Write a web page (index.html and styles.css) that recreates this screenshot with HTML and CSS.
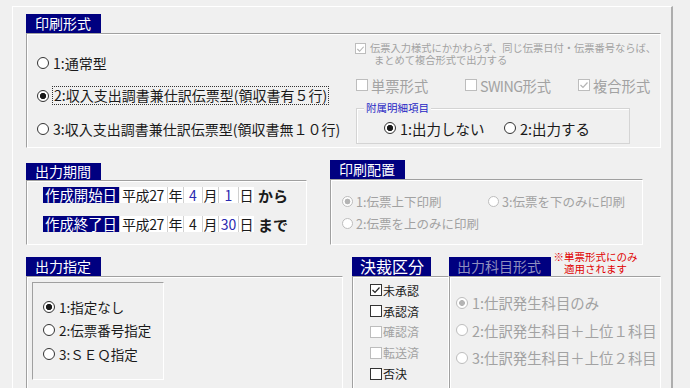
FILE: index.html
```html
<!DOCTYPE html>
<html lang="ja">

<head>
    <meta charset="UTF-8">
    <title>伝票印刷設定</title>
    <link rel="stylesheet" href="styles.css">
</head>

<body>
    <div class="panel">

        <!-- 印刷形式 -->
        <div class="group fmt">
            <div class="tab">印刷形式</div>
            <div class="box fmt-box">
                <div class="fmt-left">
                    <div class="opt"><span class="rb"></span>1:通常型</div>
                    <div class="opt"><span class="rb on"></span><span class="focus">2:収入支出調書兼仕訳伝票型(領収書有５行)</span></div>
                    <div class="opt"><span class="rb"></span>3:収入支出調書兼仕訳伝票型(領収書無１０行)</div>
                </div>
                <div class="fmt-right">
                    <div class="merge dis">
                        <span class="cb"><svg viewBox="0 0 10 10"><path d="M1.5 5 L4 7.5 L8.5 2.5" /></svg></span>
                        <p>伝票入力様式にかかわらず、同じ伝票日付・伝票番号ならば、<br><span class="indent">まとめて複合形式で出力する</span></p>
                    </div>
                    <div class="kinds dis">
                        <div class="opt k1"><span class="cb"></span>単票形式</div>
                        <div class="opt k2"><span class="cb"></span><span class="latin">SWING</span>形式</div>
                        <div class="opt"><span class="cb"><svg viewBox="0 0 10 10"><path d="M1.5 5 L4 7.5 L8.5 2.5" /></svg></span>複合形式</div>
                    </div>
                    <div class="attach">
                        <span class="attach-label">附属明細項目</span>
                        <div class="opt a1"><span class="rb on"></span>1:出力しない</div>
                        <div class="opt"><span class="rb"></span>2:出力する</div>
                    </div>
                </div>
            </div>
        </div>

        <div class="row">
            <!-- 出力期間 -->
            <div class="group period">
                <div class="tab">出力期間</div>
                <div class="box">
                    <div class="date-row">
                        <div class="date-label">作成開始日</div>
                        <div class="cell c-era">平成27</div>
                        <div class="cell c-unit">年</div>
                        <div class="cell c-m blue">4</div>
                        <div class="cell c-unit">月</div>
                        <div class="cell c-d blue">1</div>
                        <div class="cell c-unit">日</div>
                        <div class="suffix">から</div>
                    </div>
                    <div class="date-row">
                        <div class="date-label">作成終了日</div>
                        <div class="cell c-era">平成27</div>
                        <div class="cell c-unit">年</div>
                        <div class="cell c-m">4</div>
                        <div class="cell c-unit">月</div>
                        <div class="cell c-d blue">30</div>
                        <div class="cell c-unit">日</div>
                        <div class="suffix">まで</div>
                    </div>
                </div>
            </div>

            <!-- 印刷配置 -->
            <div class="group layout">
                <div class="tab">印刷配置</div>
                <div class="box dis">
                    <div class="opt"><span class="rb on"></span>1:伝票上下印刷</div>
                    <div class="opt"><span class="rb"></span>3:伝票を下のみに印刷</div>
                    <div class="opt"><span class="rb"></span>2:伝票を上のみに印刷</div>
                </div>
            </div>
        </div>

        <div class="row">
            <!-- 出力指定 -->
            <div class="group output">
                <div class="tab">出力指定</div>
                <div class="box">
                    <div class="inner">
                        <div class="opt"><span class="rb on"></span>1:指定なし</div>
                        <div class="opt"><span class="rb"></span>2:伝票番号指定</div>
                        <div class="opt"><span class="rb"></span>3:ＳＥＱ指定</div>
                    </div>
                </div>
            </div>

            <!-- 決裁区分 -->
            <div class="group decision">
                <div class="tab">決裁区分</div>
                <div class="box">
                    <div class="opt"><span class="cb"><svg viewBox="0 0 10 10"><path d="M1.5 5 L4 7.5 L8.5 2.5" /></svg></span>未承認</div>
                    <div class="opt"><span class="cb"></span>承認済</div>
                    <div class="opt dis"><span class="cb"></span>確認済</div>
                    <div class="opt dis"><span class="cb"></span>転送済</div>
                    <div class="opt"><span class="cb"></span>否決</div>
                </div>
            </div>

            <!-- 出力科目形式 -->
            <div class="group subject">
                <div class="subject-head">
                    <div class="tab">出力科目形式</div>
                    <div class="note">※単票形式にのみ<br>適用されます</div>
                </div>
                <div class="box dis">
                    <div class="opt"><span class="rb on"></span>1:仕訳発生科目のみ</div>
                    <div class="opt"><span class="rb"></span>2:仕訳発生科目＋上位１科目</div>
                    <div class="opt"><span class="rb"></span>3:仕訳発生科目＋上位２科目</div>
                </div>
            </div>
        </div>

    </div>
</body>

</html>
```

FILE: styles.css
```css
* {
    box-sizing: border-box;
}

body {
    margin: 0;
    background: #f0f0f0;
    font-family: "Noto Sans CJK JP", "Noto Sans", sans-serif;
    color: #1a1a1a;
    overflow: hidden;
}

.panel {
    width: 661px;
    height: 420px;
    margin: 6px 0 0 12px;
    padding: 7px 0 0 13px;
    border-top: 1px solid #fff;
    border-left: 1px solid #fff;
    border-right: 2px solid #adadad;
}

.row {
    display: flex;
    align-items: flex-start;
    margin-top: 12px;
}

/* 見出しタブ */
.tab {
    height: 19px;
    line-height: 19px;
    background: #000080;
    color: #fff;
    font-size: 14px;
    padding-left: 9px;
    white-space: nowrap;
}

.box {
    border: 1px solid;
    border-color: #a0a0a0 #fff #fff #a0a0a0;
    box-shadow: inset 1px 1px 0 #fff;
}

.opt {
    display: flex;
    align-items: center;
    white-space: nowrap;
}

/* ラジオボタン */
.rb {
    flex: none;
    width: 12px;
    height: 12px;
    margin-right: 4px;
    border: 1px solid #333;
    border-radius: 50%;
    background: #fff;
}

.rb.on {
    background: radial-gradient(circle, #1a1a1a 0 2.8px, #fff 3.4px);
}

/* チェックボックス */
.cb {
    flex: none;
    display: flex;
    align-items: center;
    justify-content: center;
    width: 12px;
    height: 12px;
    margin-right: 3px;
    border: 1px solid #333;
    background: #fff;
}

.cb svg {
    width: 10px;
    height: 10px;
}

.cb path {
    fill: none;
    stroke: #222;
    stroke-width: 1.2;
}

.dis {
    color: #a2a2a2;
}

.dis .cb,
.dis .rb {
    border-color: #bdbdbd;
}

.dis .cb path {
    stroke: #b4b4b4;
}

.dis .rb.on {
    background: radial-gradient(circle, #b4b4b4 0 2.6px, #fff 3.2px);
}

/* 印刷形式 */
.fmt .tab {
    width: 75px;
}

.fmt-box {
    display: flex;
    width: 635px;
    height: 115px;
}

.fmt-left {
    width: 328px;
    padding: 12px 0 0 10px;
    font-size: 14px;
}

.fmt-left .opt {
    height: 33px;
}

.focus {
    outline: 1px dotted #333;
    line-height: 17px;
    padding: 0 1px;
}

.fmt-right {
    flex: 1;
    padding-top: 8px;
}

.merge {
    display: flex;
    align-items: flex-start;
    font-size: 10.25px;
    line-height: 12px;
}

.merge .cb {
    width: 11px;
    height: 11px;
    margin: 1px 4px 0 0;
}

.merge p {
    margin: 0;
}

.indent {
    padding-left: 4px;
}

.kinds {
    display: flex;
    height: 22px;
    margin-top: 8px;
    font-size: 14.3px;
}

.kinds .opt {
    height: 22px;
}

.kinds .k1 {
    width: 109px;
    margin-left: 1px;
}

.kinds .k2 {
    width: 113px;
}

.latin {
    letter-spacing: -0.6px;
}

.attach {
    position: relative;
    display: flex;
    width: 274px;
    height: 36px;
    margin: 12px 0 0 1px;
    padding: 4px 0 0 27px;
    border: 1px solid #d4d4d4;
    box-shadow: inset 1px 1px 0 #fff;
    font-size: 14.5px;
}

.attach .opt {
    height: 30px;
}

.attach .a1 {
    width: 120px;
}

.attach-label {
    position: absolute;
    left: 7px;
    top: -7px;
    padding: 0 2px;
    background: #f0f0f0;
    font-size: 10.5px;
    line-height: 12px;
    color: #2626c4;
}

/* 出力期間 */
.period {
    width: 281px;
    margin-top: 3px;
}

.period .tab {
    width: 75px;
    height: 17px;
    line-height: 17px;
}

.period .box {
    height: 65px;
    padding: 6px 0 0 16px;
}

.date-row {
    display: flex;
    align-items: center;
    height: 16px;
    font-size: 14px;
}

.date-row + .date-row {
    margin-top: 13px;
}

.date-label {
    width: 76px;
    height: 16px;
    line-height: 16px;
    padding-left: 2px;
    background: #000080;
    color: #fff;
    font-size: 14.4px;
    white-space: nowrap;
}

.cell {
    height: 16px;
    line-height: 16px;
    background: #fff;
    border-left: 1px solid #d0d0d0;
    text-align: center;
    white-space: nowrap;
}

.c-era {
    width: 48px;
    padding-left: 2px;
    text-align: left;
    letter-spacing: -0.4px;
}

.c-unit {
    width: 16px;
}

.c-m {
    width: 19px;
}

.c-d {
    width: 20px;
}

.blue {
    color: #2b2bb0;
}

.suffix {
    margin-left: 4px;
    font-size: 15px;
    font-weight: bold;
}

/* 印刷配置 */
.layout {
    width: 313px;
    margin-left: 23px;
}

.layout .tab {
    width: 75px;
}

.layout .box {
    display: grid;
    grid-template-columns: 146px auto;
    grid-auto-rows: 22px;
    align-content: start;
    height: 66px;
    padding: 10px 0 0 11px;
    font-size: 12.5px;
}

.layout .rb {
    width: 11px;
    height: 11px;
    margin-right: 3px;
}

/* 出力指定 */
.output {
    width: 317px;
}

.output .tab {
    width: 75px;
}

.output .box {
    height: 130px;
    padding: 5px 0 0 5px;
}

.inner {
    width: 132px;
    height: 98px;
    padding: 12px 0 0 10px;
    border: 1px solid;
    border-color: #a0a0a0 #fff #fff #a0a0a0;
    font-size: 13.5px;
}

.inner .opt {
    height: 23.5px;
}

/* 決裁区分 */
.decision {
    width: 97px;
    margin-left: 9px;
}

.decision .tab {
    width: 79px;
    padding-left: 8px;
    font-size: 16px;
}

.decision .box {
    height: 130px;
    padding: 3px 0 0 17px;
    font-size: 12px;
}

.decision .opt {
    height: 20.8px;
}

.decision .cb {
    margin-right: 1px;
}

/* 出力科目形式 */
.subject {
    width: 212px;
}

.subject-head {
    display: flex;
    align-items: flex-end;
    height: 19px;
}

.subject .tab {
    width: 102px;
    padding-left: 8px;
    color: #8f8fbf;
}

.note {
    flex: none;
    width: 85px;
    margin: 0 0 1px 2px;
    text-align: center;
    font-size: 10.5px;
    line-height: 12px;
    color: #e00000;
}

.subject .box {
    height: 130px;
    padding: 12px 0 0 6px;
    font-size: 14.4px;
}

.subject .opt {
    height: 27.5px;
}
```
